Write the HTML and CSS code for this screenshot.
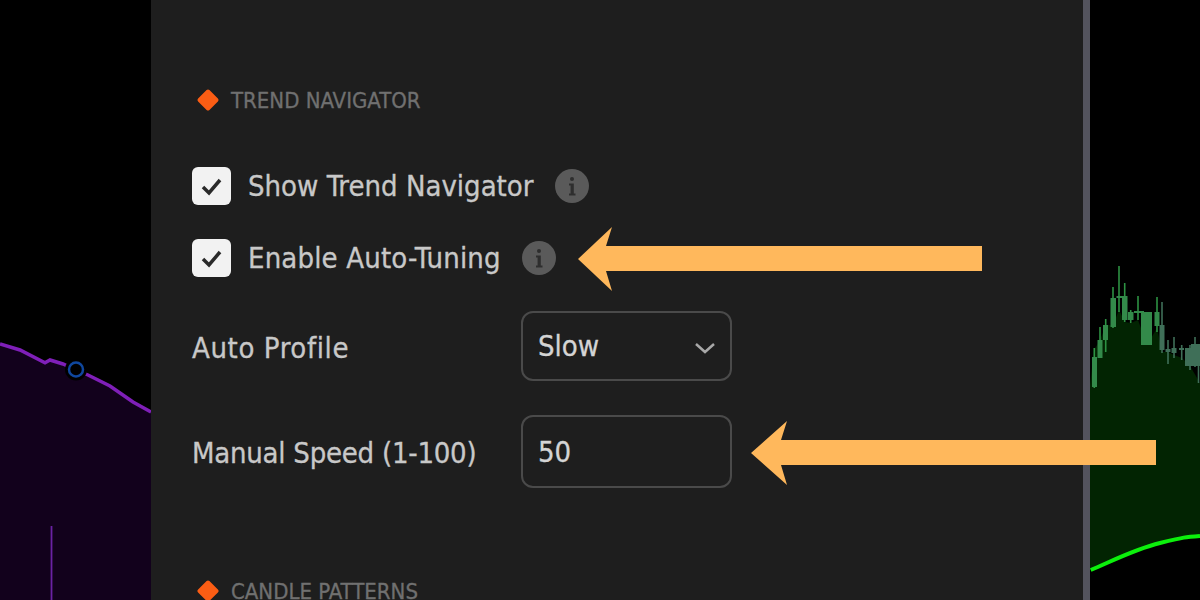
FILE: index.html
```html
<!DOCTYPE html>
<html lang="en">
<head>
<meta charset="utf-8">
<title>Trend Navigator settings</title>
<link rel="stylesheet" href="styles.css">
</head>
<body>
<div class="stage">
  <svg class="chart chart-left" viewBox="0 0 151 600" aria-hidden="true">
    <polygon class="violet-area" points="0,344 20,350 45,362.7 50,360 63,364 76,370 88,375 110,386 133,402 151,412 151,600 0,600"/>
    <polyline class="violet-line" points="0,344 20,350 45,362.7 50,360 63,364 76,370 88,375 110,386 133,402 151,412"/>
    <circle class="marker-halo" cx="76" cy="369.5" r="11"/>
    <circle class="marker" cx="76" cy="369.5" r="7"/>
    <line class="violet-tick" x1="51.5" y1="526" x2="51.5" y2="600"/>
  </svg>

  <main class="panel">
    <section class="group">
      <h2 class="group-title"><span class="diamond"></span>TREND NAVIGATOR</h2>
      <div class="check-row">
        <span class="checkbox"><svg viewBox="0 0 38 38"><path d="M11 20l6 6 11-13"/></svg></span>
        <span class="label">Show Trend Navigator</span>
        <svg class="info" viewBox="0 0 34 34"><circle class="info-disc" cx="17" cy="17" r="17"/><circle class="info-mark" cx="17" cy="10" r="2"/><path class="info-mark" d="M14 14.5h4.8v10h1.7v2h-6.5v-2h1.6v-8h-1.6z"/></svg>
      </div>
      <div class="check-row">
        <span class="checkbox"><svg viewBox="0 0 38 38"><path d="M11 20l6 6 11-13"/></svg></span>
        <span class="label label-wide">Enable Auto-Tuning</span>
        <svg class="info" viewBox="0 0 34 34"><circle class="info-disc" cx="17" cy="17" r="17"/><circle class="info-mark" cx="17" cy="10" r="2"/><path class="info-mark" d="M14 14.5h4.8v10h1.7v2h-6.5v-2h1.6v-8h-1.6z"/></svg>
      </div>
      <div class="field-row profile-row">
        <span class="label label-profile field-label">Auto Profile</span>
        <div class="control select-control">
          <span>Slow</span>
          <svg class="chevron" viewBox="0 0 22 12"><path d="M2 2l9 8 9-8"/></svg>
        </div>
      </div>
      <div class="field-row speed-row">
        <span class="label label-speed field-label">Manual Speed (1-100)</span>
        <div class="control input-control"><span>50</span></div>
      </div>
    </section>
    <section class="group">
      <h2 class="group-title"><span class="diamond"></span>CANDLE PATTERNS</h2>
    </section>
  </main>

  <svg class="chart chart-right" viewBox="0 0 110 600" aria-hidden="true">
    <polygon class="green-area" points="0,385 4,350 10,340 16,325 23,325 29,310 35,322 41,323 48,320 57,345 67,328 72,352 78,352 84,355 92,358 100,366 110,383 110,536 70,543 36.7,555 0.7,570 0,570"/>
    <g class="wicks bright">
      <line x1="4.3" y1="348" x2="4.3" y2="388"/><line x1="10" y1="327" x2="10" y2="358"/><line x1="15.7" y1="319" x2="15.7" y2="352"/>
      <line x1="23" y1="287" x2="23" y2="328"/><line x1="29" y1="266" x2="29" y2="312"/><line x1="34.7" y1="283" x2="34.7" y2="322"/>
      <line x1="40.7" y1="310" x2="40.7" y2="323"/><line x1="48" y1="296" x2="48" y2="320"/><line x1="67" y1="297" x2="67" y2="332"/>
    </g>
    <g class="bodies bright">
      <rect x="2" y="357" width="5" height="30"/><rect x="7.5" y="340" width="5" height="18"/><rect x="13" y="325" width="5" height="15"/>
      <rect x="20.5" y="298" width="5.5" height="29"/><rect x="26.5" y="296" width="6" height="2"/><rect x="32" y="296" width="5.5" height="24"/>
      <rect x="38" y="312" width="5.5" height="8"/><rect x="44" y="311" width="10" height="2"/><rect x="51" y="312" width="11" height="33"/><rect x="64.5" y="312" width="5" height="14"/>
    </g>
    <g class="wicks dim">
      <line x1="72" y1="302" x2="72" y2="353"/><line x1="78" y1="340" x2="78" y2="364"/><line x1="84" y1="337" x2="84" y2="358"/>
      <line x1="91.7" y1="345" x2="91.7" y2="360"/><line x1="100" y1="345" x2="100" y2="370"/><line x1="105" y1="337" x2="105" y2="367"/><line x1="108.5" y1="350" x2="108.5" y2="383"/>
    </g>
    <g class="bodies dim">
      <rect x="69.5" y="325" width="5" height="25"/><rect x="75.5" y="349" width="5" height="3"/><rect x="81.5" y="348" width="5" height="5"/>
      <rect x="89" y="348" width="5" height="2"/><rect x="95" y="348" width="6" height="18"/><rect x="101" y="344" width="9" height="22"/>
    </g>
    <path class="green-line" d="M0.7 570C20 562 45 549 70 543S95 537 110 536"/>
  </svg>

  <svg class="arrow arrow-top" viewBox="0 0 404 64" aria-hidden="true"><path d="M0 32L34 0 28 19H404V44H28L34 64Z"/></svg>
  <svg class="arrow arrow-bottom" viewBox="0 0 405 64" aria-hidden="true"><path d="M0 32L36 0 30 19H405V44H30L36 64Z"/></svg>
</div>
</body>
</html>
```
FILE: styles.css
```css
* { box-sizing: border-box; }
html, body { margin: 0; height: 100%; background: #000; }
body { overflow: hidden; }

.stage {
  position: relative;
  display: flex;
  width: 1200px;
  height: 600px;
  overflow: hidden;
  background: #000;
  font-family: "DejaVu Sans Condensed", "DejaVu Sans", sans-serif;
  font-stretch: condensed;
}

.chart { display: block; flex: none; height: 600px; filter: blur(0.5px); }
.chart-left { width: 151px; }
.chart-right { width: 110px; }

.violet-area { fill: #12011c; }
.violet-line { fill: none; stroke: #7f1fb8; stroke-width: 3.5; }
.violet-tick { stroke: #6a22a3; stroke-width: 1.8; }
.marker-halo { fill: #000; }
.marker { fill: #000; stroke: #0f479e; stroke-width: 2.5; }

.green-area { fill: #022402; }
.green-line { fill: none; stroke: #0cf00c; stroke-width: 4; }
.wicks line { stroke-width: 1.6; }
.wicks.bright line { stroke: #2d9243; }
.wicks.dim line { stroke: #3f6f58; }
.bodies.bright rect { fill: #338a4a; }
.bodies.dim rect { fill: #3f6f58; }

.panel {
  flex: none;
  width: 939px;
  height: 600px;
  overflow: hidden;
  padding: 85px 0 0 41px;
  background: #1e1e1e;
  border-right: 7px solid #53535d;
  color: #c8c8c8;
}

.group { margin-bottom: 88px; }

.group-title {
  display: flex;
  align-items: center;
  gap: 15px;
  height: 30px;
  margin: 0 0 52px 6px;
  font-size: 22px;
  font-weight: 400;
  color: #707070;
  -webkit-text-stroke: 0.3px #707070;
}

.diamond {
  width: 16px;
  height: 16px;
  margin-left: 2px;
  background: #fb5d14;
  border-radius: 2px;
  transform: rotate(45deg);
}

.check-row {
  display: flex;
  align-items: center;
  height: 38px;
  margin-bottom: 34px;
}

.checkbox {
  flex: none;
  width: 39px;
  height: 38px;
  margin-right: 17px;
  background: #f2f2f2;
  border-radius: 6px;
}
.checkbox svg { display: block; width: 38px; height: 38px; }
.checkbox path { fill: none; stroke: #2a2a2a; stroke-width: 3.5; }

.label {
  font-size: 29px;
  white-space: nowrap;
  -webkit-text-stroke: 0.3px #c8c8c8;
}
.label-wide { letter-spacing: 0.15px; }
.label-profile { letter-spacing: 0.6px; }
.label-speed { letter-spacing: -0.25px; }

.info { flex: none; width: 34px; height: 34px; margin-left: 21px; }
.info-disc { fill: #5a5a5a; }
.info-mark { fill: #2e2e2e; }

.field-row { display: flex; align-items: center; }
.field-label { flex: none; width: 329px; padding-top: 3px; }
.profile-row { height: 70px; margin: 2px 0 34px; }
.speed-row { height: 73px; }

.control {
  display: flex;
  align-items: center;
  justify-content: space-between;
  width: 211px;
  height: 100%;
  padding: 0 15px;
  border: 2px solid #4a4a4a;
  border-radius: 12px;
  font-size: 29px;
  color: #d4d4d4;
  -webkit-text-stroke: 0.3px #d4d4d4;
}
.chevron { width: 22px; height: 12px; margin: 3px -1px 0 0; }
.chevron path { fill: none; stroke: #a8a8a8; stroke-width: 2.5; }

.arrow { position: absolute; fill: #ffb85c; }
.arrow-top { left: 578px; top: 227px; width: 404px; height: 64px; }
.arrow-bottom { left: 751px; top: 421px; width: 405px; height: 64px; }
```
